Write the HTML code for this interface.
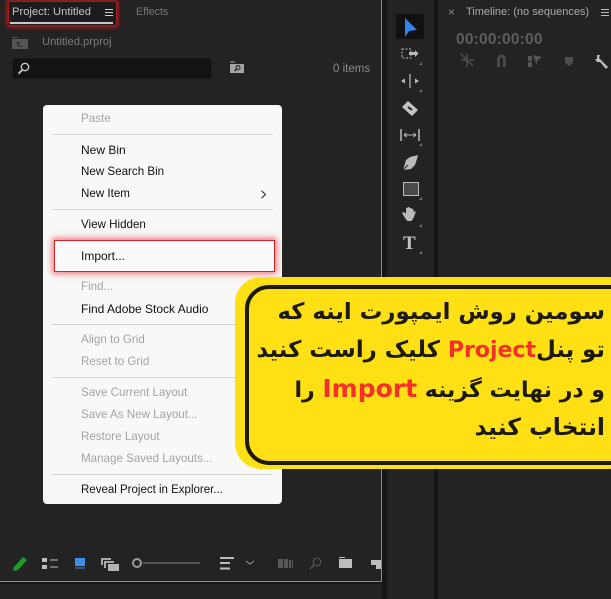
<!DOCTYPE html>
<html lang="en"><head><meta charset="utf-8"><title>Project panel</title>
<style>
html,body{margin:0;padding:0}
body{width:611px;height:599px;overflow:hidden;position:relative;background:#232323;font-family:"Liberation Sans",sans-serif}
.a{position:absolute;white-space:nowrap}
.m{position:absolute;left:81px;font-size:11.6px;line-height:16px;color:#111;white-space:nowrap}
.d{color:#a3a3a3}
.s{position:absolute;left:52px;width:221px;height:1px;background:#d2d2d2}
.fa{font-family:"DejaVu Sans",sans-serif;font-weight:bold;color:#1c1a12;direction:rtl;font-size:23px;line-height:36px;position:absolute;white-space:nowrap}
.fa b{color:#f5302a}
svg{position:absolute;overflow:visible}
</style></head><body>
<!-- panel chrome -->
<div class="a" style="left:0;top:0;width:381px;height:581px;background:#232323;border-right:1px solid #3fa7d6;border-bottom:1px solid #3fa7d6"></div>
<div class="a" style="left:382px;top:0;width:5px;height:599px;background:#161616"></div>
<div class="a" style="left:434px;top:0;width:4px;height:599px;background:#161616"></div>
<div class="a" style="left:0;top:582px;width:382px;height:2px;background:#171717"></div>

<!-- tab highlight -->
<div class="a" style="left:9px;top:2px;width:107px;height:23px;background:#1c1c1c;box-shadow:0 0 4px 2px #c9181c"></div>
<div class="a" style="left:12px;top:5px;font-size:11.2px;line-height:15px;color:#c4c4c4;letter-spacing:0">Project: Untitled</div>
<div class="a" style="left:105px;top:9px;width:8px;height:1px;background:#ccc;box-shadow:0 3px 0 #ccc,0 6px 0 #ccc"></div>
<div class="a" style="left:10px;top:22px;width:103px;height:2px;background:#c8c8c8"></div>
<div class="a" style="left:136px;top:5px;font-size:10.6px;line-height:15px;color:#777">Effects</div>

<!-- project row -->
<div class="a" style="left:12px;top:39px;width:16px;height:10px;background:#565656"></div>
<div class="a" style="left:12px;top:37px;width:6px;height:1px;background:#565656"></div>
<svg style="left:16px;top:41px" width="8" height="7" viewBox="0 0 8 7"><path d="M2 5V1M.5 2.500 2 1l1.500 1.500M2 5h5" stroke="#262626" fill="none"/></svg>
<div class="a" style="left:42px;top:35px;font-size:11.2px;line-height:15px;color:#7c7c7c">Untitled.prproj</div>

<!-- search -->
<div class="a" style="left:12px;top:58px;width:198px;height:19px;background:#131313;border-radius:3px;border:1px solid #1a1a1a"></div>
<svg style="left:17px;top:62px" width="14" height="13" viewBox="0 0 14 13"><circle cx="8" cy="5" r="3.700" fill="none" stroke="#c8c8c8" stroke-width="1.300"/><path d="M5.400 7.800 1.500 11.700" stroke="#c8c8c8" stroke-width="1.800"/></svg>
<svg style="left:230px;top:61px" width="15" height="13" viewBox="0 0 15 13"><path d="M0 3h14v9H0z" fill="#a4a4a4"/><path d="M0 1h5" stroke="#a4a4a4"/><circle cx="8" cy="6.600" r="2" fill="none" stroke="#222" stroke-width="1.100"/><path d="M6.600 8 4.600 10" stroke="#222" stroke-width="1.300"/></svg>
<div class="a" style="left:333px;top:62px;font-size:11.5px;line-height:14px;color:#8a8a8a">0 items</div>

<!-- menu -->
<div class="a" style="left:43px;top:105px;width:239px;height:399px;background:#f8f8f8;border-radius:4px"></div>
<div class="m d" style="top:111px">Paste</div>
<div class="s" style="top:134px"></div>
<div class="m" style="top:142px;font-size:12px">New Bin</div>
<div class="m" style="top:164px">New Search Bin</div>
<div class="m" style="top:186px">New Item</div>
<svg style="left:260px;top:190px" width="7" height="9" viewBox="0 0 7 9"><path d="M1.500 .8 5.500 4.500 1.500 8.200" fill="none" stroke="#333" stroke-width="1.100"/></svg>
<div class="s" style="top:209px"></div>
<div class="m" style="top:217px">View Hidden</div>
<div class="a" style="left:54px;top:240px;width:219px;height:30px;background:#fafafa;border:1px solid #d2262b;box-shadow:0 0 6px 2px rgba(232,44,50,.6)"></div>
<div class="m" style="top:248px;font-size:12px">Import...</div>
<div class="m d" style="top:279px">Find...</div>
<div class="m" style="top:301px;font-size:12px">Find Adobe Stock Audio</div>
<div class="s" style="top:324px"></div>
<div class="m d" style="top:332px">Align to Grid</div>
<div class="m d" style="top:354px">Reset to Grid</div>
<div class="s" style="top:377px"></div>
<div class="m d" style="top:385px">Save Current Layout</div>
<div class="m d" style="top:407px">Save As New Layout...</div>
<div class="m d" style="top:429px">Restore Layout</div>
<div class="m d" style="top:451px">Manage Saved Layouts...</div>
<div class="s" style="top:474px"></div>
<div class="m" style="top:482px;font-size:11.500px">Reveal Project in Explorer...</div>

<!-- bottom toolbar -->
<svg style="left:0;top:550px" width="381" height="30" viewBox="0 0 381 30">
<path d="M14 17 23 7l4 3-9 10-5 1z" fill="#1f9a2c"/>
<path d="M42 8h5v4h-5zM42 15h5v4h-5z" fill="#bdbdbd"/><path d="M50 10h8M50 17h8" stroke="#bdbdbd"/>
<path d="M75 8h10v8H75z" fill="#3f8ee8"/><path d="M75 18h10" stroke="#3f8ee8"/>
<path d="M101 8h10v2h-8v5h-2zM104 11h10v2h-8v5h-2z" fill="#a8a8a8"/><path d="M108 14h11v7h-11z" fill="#b4b4b4"/>
<circle cx="137" cy="13" r="4" fill="none" stroke="#9a9a9a" stroke-width="2"/><path d="M143 13h57" stroke="#555" stroke-width="2"/>
<path d="M220 8h14M220 13h10M220 18.500h10" stroke="#bdbdbd" stroke-width="2"/>
<path d="M246 11l4 3 4-3" fill="none" stroke="#9a9a9a"/>
<path d="M278 9h5v9h-5zM284 9h4v9h-4zM289 10h2v8h-2zM292 10h1v8h-1z" fill="#595959"/>
<circle cx="317" cy="12" r="3.800" fill="none" stroke="#555" stroke-width="1.200"/><path d="M314 15l-4 4" stroke="#555" stroke-width="1.500"/>
<path d="M339 9h13v9h-13zM339 7h6v1h-6z" fill="#bdbdbd"/>
<path d="M371 10h10v9h-5v-4h-5z" fill="#bdbdbd"/>
</svg>

<!-- toolbar -->
<div class="a" style="left:396px;top:14px;width:28px;height:25px;background:#111;border-radius:2px"></div>
<svg style="left:387px;top:0" width="47" height="270" viewBox="387 0 47 270">
<path d="M405 18v19l4-6 8-1z" fill="#2f86ee"/>
<path d="M402 49h9v9h-9z" fill="none" stroke="#bbb" stroke-dasharray="2 1.500"/><path d="M409 52h6v-2l3.500 3.500-3.500 3.500v-2h-6z" fill="#bbb"/>
<path d="M410 74v14" stroke="#bbb" stroke-width="1.200"/><path d="M409 81h-4v-2.500l-4 2.500 4 2.500V81zM411 81h4v-2.500l4 2.500-4 2.500V81z" fill="#bbb"/>
<path d="M402 107l6-6 10 9-6 6z" fill="#c4c4c4"/><path d="M408 107l4 3" stroke="#222" stroke-width="2"/>
<path d="M401 129v12M419 129v12" stroke="#bbb" stroke-width="1.500"/><path d="M404 135h12M404 135l2.500-2M404 135l2.500 2M416 135l-2.500-2M416 135l-2.500 2" stroke="#bbb" fill="none"/>
<path d="M418 155l-8 2-4 3-3 10 8-1 4-4 2-6z" fill="#bbb"/><path d="M403 170l5-5" stroke="#222"/>
<rect x="403.500" y="182.500" width="15" height="13" fill="#4a4a4a" stroke="#bbb"/>
<path d="M405 218l-3-5 2-1 2 2v-6h1.500v-1h2v1h2v1h2v3l2-1v2l-2 5-2 3h-4z" fill="#bbb"/>
<text x="403" y="249" font-family="Liberation Serif,serif" font-size="19" font-weight="bold" fill="#c4c4c4">T</text>
<path d="M419 65h3v-3zM419 92h3v-3zM419 146h3v-3zM419 200h3v-3zM419 227h3v-3zM419 254h3v-3z" fill="#777"/>
</svg>

<!-- timeline -->
<div class="a" style="left:448px;top:5px;font-size:12px;line-height:15px;color:#888">×</div>
<div class="a" style="left:466px;top:5px;font-size:11px;line-height:15px;color:#aaa">Timeline: (no sequences)</div>
<div class="a" style="left:601px;top:9px;width:8px;height:1px;background:#bbb;box-shadow:0 3px 0 #bbb,0 6px 0 #bbb"></div>
<div class="a" style="left:456px;top:30px;font-size:15.500px;line-height:19px;font-weight:bold;color:#5e5e5e;letter-spacing:.2px">00:00:00:00</div>
<svg style="left:456px;top:50px" width="155" height="20" viewBox="456 50 155 20">
<path d="M461 54l12 12M467 54v13M461 60h5M469 60h5" stroke="#4f4f4f" stroke-width="1.500"/>
<path d="M497 67v-8a4.500 4.500 0 0 1 9 0v8h-3v-8a1.500 1.500 0 0 0-3 0v8z" fill="#494949"/>
<path d="M528 56h4v5h-4zM528 62h4v5h-4zM533 55l9 2-5 4v5z" fill="#555"/>
<path d="M565 57h8v6l-4 3-4-3z" fill="#4e4e4e"/>
<path d="M597 55l3 0-1 3 4 4 5 5-2 2-6-7-3 0-2-3 2 0z" fill="#bdbdbd"/>
</svg>

<!-- callout -->
<div class="a" style="left:235px;top:277px;width:400px;height:192px;background:#ffe014;border-radius:26px"></div>
<div class="a" style="left:245px;top:285px;width:390px;height:172px;border:4px solid #1d1a12;border-radius:24px"></div>
<div class="fa" style="right:6px;top:294px;font-size:22.700px">سومین روش ایمپورت اینه که</div>
<div class="fa" style="right:6px;top:332px;font-size:22.800px">تو پنل<b style="font-size:22px">Project</b> کلیک راست کنید</div>
<div class="fa" style="right:6px;top:371px;font-size:22px">و در نهایت گزینه <b style="font-size:25px">Import</b> را</div>
<div class="fa" style="right:6px;top:409px;font-size:23.500px">انتخاب کنید</div>
</body></html>
